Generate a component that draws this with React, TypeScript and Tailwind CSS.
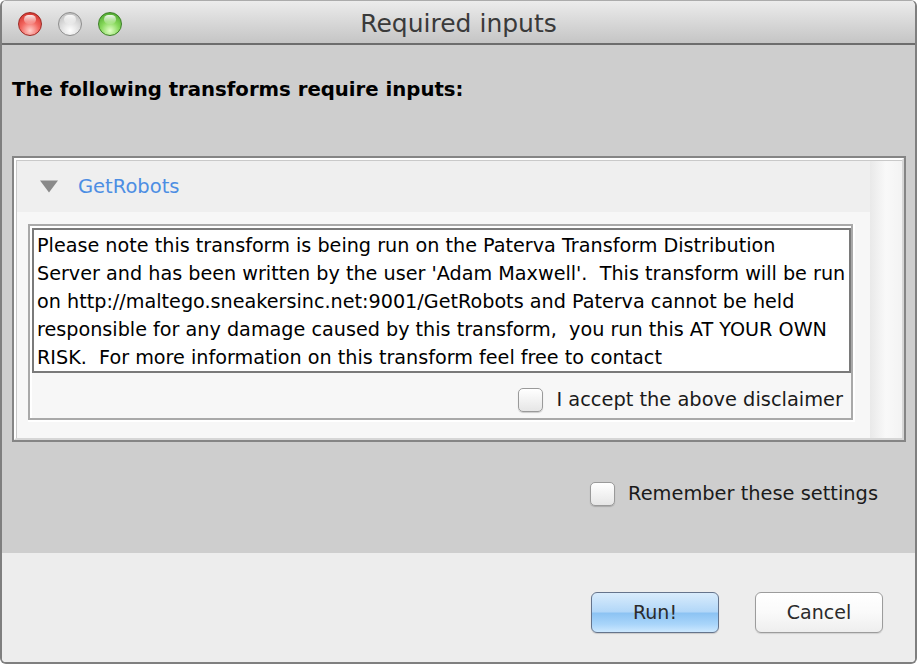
import React from "react";

const body = { fontFamily: '"DejaVu Sans", Verdana, sans-serif' } as const;
const dv = { fontFamily: '"DejaVu Sans", Verdana, sans-serif' } as const;

function Light({ kind }: { kind: "red" | "gray" | "green" }) {
  const cls =
    kind === "red"
      ? "bg-[radial-gradient(circle_at_50%_80%,#ffd0cb_0%,#f2665f_45%,#c9251f_100%)] border-[#9d2a25]"
      : kind === "gray"
      ? "bg-[radial-gradient(circle_at_50%_80%,#ffffff_0%,#dedede_45%,#b3b3b3_100%)] border-[#8e8e8e]"
      : "bg-[radial-gradient(circle_at_50%_80%,#e2ffc8_0%,#86d85a_45%,#3f9a22_100%)] border-[#3c7f27]";
  return (
    <div className={`relative h-[24px] w-[24px] rounded-full border ${cls}`}>
      <div className="absolute left-[5px] top-[2px] h-[9px] w-[12px] rounded-full bg-gradient-to-b from-white/90 to-white/10" />
    </div>
  );
}

function Check() {
  return (
    <div className="h-[24px] w-[25px] rounded-[5px] border border-[#9a9a9a] bg-gradient-to-b from-white to-[#e6e6e6] shadow-[0_1px_1px_rgba(0,0,0,0.18)]" />
  );
}

export default function App() {
  const lines = [
    "Please note this transform is being run on the Paterva Transform Distribution",
    "Server and has been written by the user 'Adam Maxwell'.  This transform will be run",
    "on http://maltego.sneakersinc.net:9001/GetRobots and Paterva cannot be held",
    "responsible for any damage caused by this transform,  you run this AT YOUR OWN",
    "RISK.  For more information on this transform feel free to contact",
  ];
  return (
    <div className="h-[664px] w-[918px] overflow-hidden bg-white">
      <div className="flex h-[664px] w-[917px] flex-col overflow-hidden rounded-[6px] border-x-2 border-b-2 border-t border-x-[#7f7f7f] border-b-[#7f7f7f] border-t-[#ababab]">
        {/* Title bar */}
        <div className="relative h-[44px] shrink-0 border-b-2 border-[#6d6d6d] bg-gradient-to-b from-[#ececec] to-[#c5c5c5]">
          <div className="flex gap-[16px] pl-[16px] pt-[11px]">
            <Light kind="red" />
            <Light kind="gray" />
            <Light kind="green" />
          </div>
          <div
            className="absolute inset-0 text-center text-[25px] leading-[45px] text-[#3a3a3a]"
            style={dv}
          >
            Required inputs
          </div>
        </div>

        {/* Body */}
        <div className="flex h-[508px] shrink-0 flex-col bg-[#cecece] pl-[10px] pr-[9px]">
          <div
            className="mt-[33px] h-[24px] text-[19.7px] font-bold leading-[24px] text-black"
            style={dv}
          >
            The following transforms require inputs:
          </div>

          {/* Panel */}
          <div className="mt-[54px] h-[286px] border-2 border-[#858585]">
            <div className="h-full border-2 border-l-white border-t-white border-r-[#d6d6d6] border-b-[#d6d6d6]">
              <div className="flex h-full border-l border-t border-[#c9c9c9]">
                <div className="flex min-w-0 flex-1 flex-col bg-[#f7f7f7]">
                  <div className="flex h-[51px] items-center bg-[#efefef] pl-[23px]">
                    <svg width="18" height="13" viewBox="0 0 18 13">
                      <polygon points="0,0.5 18,0.5 9,12.5" fill="#8a8a8a" />
                    </svg>
                    <span className="ml-[20px] text-[19.5px] text-[#4d8ee3]" style={body}>
                      GetRobots
                    </span>
                  </div>
                  <div className="ml-[11px] mr-[15px] mt-[12px] border-b-2 border-r-2 border-white">
                    <div className="border-2 border-[#a9a9a9]">
                      <div className="border-l-2 border-t-2 border-white">
                        <div
                          className="h-[145px] overflow-hidden border-2 border-[#7a7a7a] bg-white pl-[3px] pt-[2px] text-[19.2px] leading-[28px] text-black whitespace-pre"
                          style={body}
                        >
                          {lines.map((l, i) => (
                            <div key={i}>{l}</div>
                          ))}
                        </div>
                        <div className="flex h-[45px] items-center justify-end pr-[8px] pt-[9px]">
                          <Check />
                          <span className="ml-[13px] text-[19.4px] text-[#1a1a1a]" style={body}>
                            I accept the above disclaimer
                          </span>
                        </div>
                      </div>
                    </div>
                  </div>
                </div>
                <div className="w-[32px] shrink-0 bg-gradient-to-r from-[#e9e9e9] via-[#f9f9f9] to-[#f3f3f3]" />
              </div>
            </div>
          </div>

          <div className="mt-[37px] flex h-[30px] items-center justify-end pr-[28px]">
            <Check />
            <span className="ml-[13px] text-[19.4px] text-[#1a1a1a]" style={body}>
              Remember these settings
            </span>
          </div>
        </div>

        {/* Footer */}
        <div className="flex flex-1 items-start justify-end gap-[36px] bg-[#ededed] pr-[32px] pt-[39px]">
          <button
            className="h-[41px] w-[128px] rounded-[6px] border border-[#65748c] bg-[linear-gradient(to_bottom,#d9ecfc_0%,#b2d7f8_48%,#8cc3f3_52%,#a9d5fa_80%,#cde8fe_100%)] text-[19px] text-[#2b2b2b] shadow-[0_1px_1px_rgba(0,0,0,0.15)]"
            style={body}
          >
            Run!
          </button>
          <button
            className="h-[41px] w-[128px] rounded-[6px] border border-[#9c9c9c] bg-gradient-to-b from-white via-[#fafafa] to-[#eeeeee] text-[19px] text-[#2b2b2b] shadow-[0_1px_1px_rgba(0,0,0,0.12)]"
            style={body}
          >
            Cancel
          </button>
        </div>
      </div>
    </div>
  );
}
